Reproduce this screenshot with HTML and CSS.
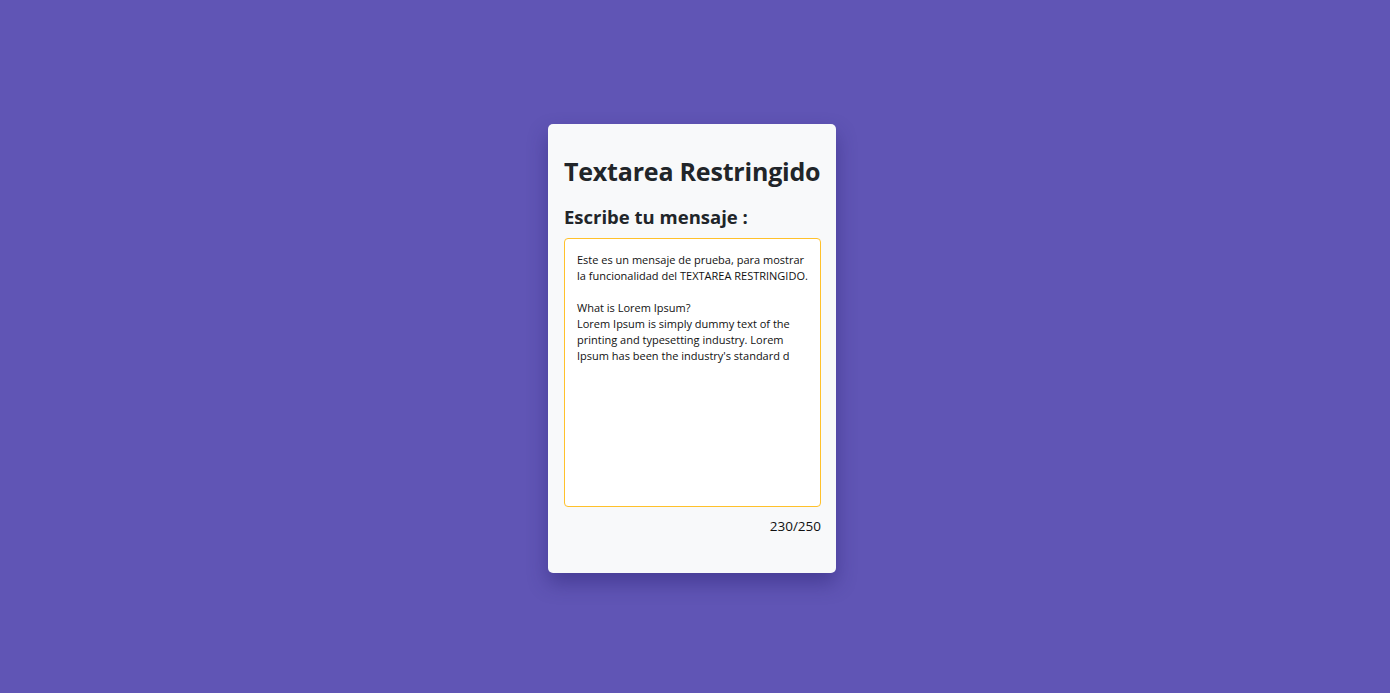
FILE: index.html
```html
<!DOCTYPE html>
<html lang="es">
<head>
<meta charset="utf-8">
<title>Textarea Restringido</title>
<link rel="stylesheet" href="styles.css">
</head>
<body>
<main class="page">
  <section class="card">
    <h1 class="title">Textarea Restringido</h1>
    <h2 class="subtitle">Escribe tu mensaje :</h2>
    <textarea class="message" maxlength="250">Este es un mensaje de prueba, para mostrar la funcionalidad del TEXTAREA RESTRINGIDO.

What is Lorem Ipsum?
Lorem Ipsum is simply dummy text of the printing and typesetting industry. Lorem Ipsum has been the industry's standard d</textarea>
    <p class="counter">230/250</p>
  </section>
</main>
</body>
</html>
```

FILE: styles.css
```css
html, body {
  margin: 0;
  padding: 0;
}
body {
  background: #6055b5;
  font-family: "Open Sans", "DejaVu Sans", sans-serif;
  color: #212529;
}
.page {
  min-height: 100vh;
  display: flex;
  align-items: center;
  justify-content: center;
  padding-right: 6px;
  box-sizing: border-box;
}
.card {
  width: 288px;
  height: 449px;
  box-sizing: border-box;
  background: #f8f9fa;
  border-radius: 5px;
  padding: 30px 15px 0 16px;
  box-shadow: 0 10px 20px rgba(40, 30, 110, 0.45);
  display: flex;
  flex-direction: column;
  margin-top: 4px;
}
.title {
  margin: 0;
  font-size: 25px;
  line-height: 34px;
  font-weight: 700;
  letter-spacing: -0.2px;
  white-space: nowrap;
  color: #212529;
}
.subtitle {
  margin: 16px 0 0;
  font-size: 18.5px;
  line-height: 26px;
  font-weight: 700;
  color: #212529;
}
.message {
  margin-top: 8px;
  width: 257px;
  height: 269px;
  box-sizing: border-box;
  border: 1px solid #ffc12b;
  border-radius: 4px;
  background: #fff;
  padding: 13px 11px 12px 12px;
  font-family: "Open Sans", "DejaVu Sans", sans-serif;
  font-size: 11px;
  line-height: 16px;
  color: #111;
  resize: none;
  outline: none;
  overflow: hidden;
}
.counter {
  margin: 10px 0 0;
  text-align: right;
  font-family: "Open Sans", "DejaVu Sans", sans-serif;
  font-size: 13.5px;
  line-height: 18px;
  color: #111;
}
```
